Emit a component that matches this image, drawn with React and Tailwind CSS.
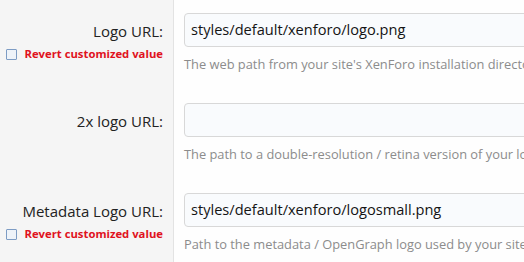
import React from "react";

const rows = [
  {
    label: "Logo URL:",
    value: "styles/default/xenforo/logo.png",
    explain: "The web path from your site's XenForo installation directory to the logo image",
    revert: true,
  },
  {
    label: "2x logo URL:",
    value: "",
    explain: "The path to a double-resolution / retina version of your logo image",
    revert: false,
  },
  {
    label: "Metadata Logo URL:",
    value: "styles/default/xenforo/logosmall.png",
    explain: "Path to the metadata / OpenGraph logo used by your site",
    revert: true,
  },
];

function Row({ label, value, explain, revert }) {
  return (
    <div className="grid grid-cols-[174px_1fr] h-[90px]">
      <div className="bg-[#f5f5f5] border-r border-[#e3e3e3] pr-[10px] pt-[21px] text-right">
        <div className="text-[15px] leading-[20px] text-[#222] whitespace-nowrap">{label}</div>
        {revert && (
          <div className="flex items-center justify-end gap-[7px] mt-[5px] whitespace-nowrap">
            <span className="w-[11px] h-[11px] border-[1.5px] border-[#7d9cc4] bg-[#eef3f9] rounded-[1px] shrink-0" />
            <span className="text-[11.3px] leading-[16px] font-bold text-[#e0121d]">Revert customized value</span>
          </div>
        )}
      </div>
      <div className="pl-[10px] pt-[13px] overflow-hidden bg-[#fefefe]">
        <div className="h-[34px] w-[400px] border border-[#d8d8d8] rounded-[4px] bg-[#f9fbfd] pl-[6px] flex items-center text-[14.6px] text-[#141414] whitespace-nowrap">
          {value}
        </div>
        <div className="mt-[8px] text-[12.85px] leading-[18px] text-[#8c8c8c] whitespace-nowrap">{explain}</div>
      </div>
    </div>
  );
}

export default function App() {
  return (
    <div className="w-[524px] h-[262px] overflow-hidden bg-[#fefefe]" style={{ fontFamily: '"Open Sans", "Noto Sans", sans-serif' }}>
      {rows.map((r) => (
        <Row key={r.label} {...r} />
      ))}
    </div>
  );
}
